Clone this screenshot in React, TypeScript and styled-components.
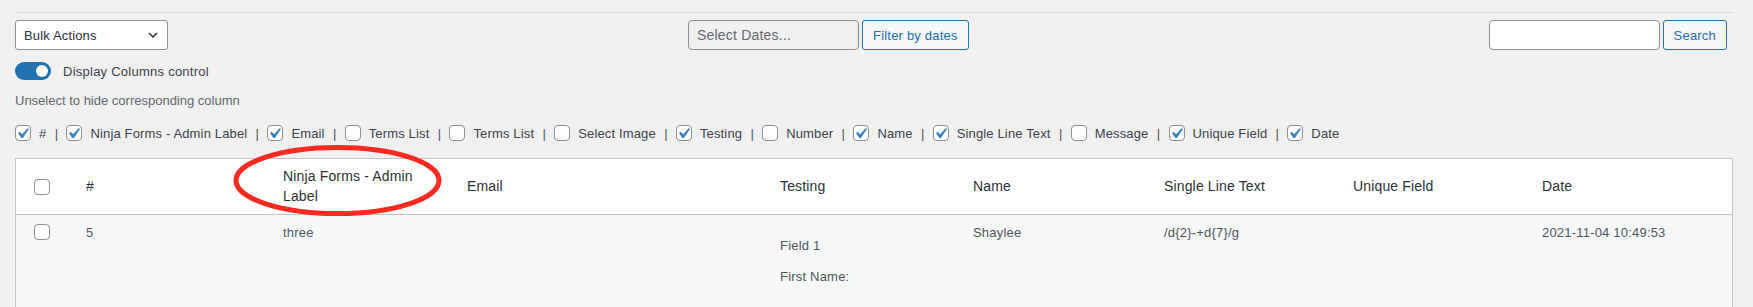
import React from "react";
import styled, { createGlobalStyle } from "styled-components";

const GlobalStyle = createGlobalStyle`
  html, body {
    margin: 0;
    padding: 0;
    background: #f0f0f1;
  }
  body {
    font-family: "Liberation Sans", Arial, sans-serif;
    font-size: 13px;
    color: #3c434a;
    letter-spacing: 0.2px;
  }
  * { box-sizing: border-box; }
`;

const Page = styled.div`
  position: relative;
  height: 307px;
  overflow: hidden;
  padding: 12px 20px 0 15px;
`;

const Wrap = styled.div`
  border-top: 1px solid #dcdcde;
`;

const Toolbar = styled.div`
  display: flex;
  align-items: center;
  margin-top: 7px;
  height: 30px;
`;

const SelectBox = styled.div`
  width: 153px;
  height: 30px;
  display: flex;
  align-items: center;
  justify-content: space-between;
  padding: 0 9px 0 8px;
  background: #fff;
  border: 1px solid #8c8f94;
  border-radius: 3px;
  color: #2c3338;
  font-size: 13px;
  letter-spacing: 0.15px;
`;

const Group = styled.div<{ $ml?: string; $mr?: string }>`
  display: flex;
  align-items: center;
  gap: 3px;
  margin-left: ${(p) => p.$ml ?? "0"};
  margin-right: ${(p) => p.$mr ?? "0"};
`;

const TextInput = styled.div<{ $bg: string }>`
  width: 171px;
  height: 30px;
  display: flex;
  align-items: center;
  padding: 0 8px;
  background: ${(p) => p.$bg};
  border: 1px solid #8c8f94;
  border-radius: 4px;
  color: #646970;
  font-size: 14px;
  letter-spacing: 0.2px;
`;

const Button = styled.div`
  height: 30px;
  display: flex;
  align-items: center;
  padding: 0 10px;
  background: #f6f7f7;
  border: 1px solid #2271b1;
  border-radius: 3px;
  color: #2271b1;
  font-size: 13px;
  white-space: nowrap;
`;

const ToggleRow = styled.div`
  display: flex;
  align-items: center;
  gap: 12px;
  margin-top: 12px;
  height: 18px;
`;

const Toggle = styled.span`
  position: relative;
  width: 36px;
  height: 18px;
  border-radius: 9px;
  background: #2271b1;
  flex: none;
  &::after {
    content: "";
    position: absolute;
    right: 3px;
    top: 3px;
    width: 12px;
    height: 12px;
    border-radius: 50%;
    background: #fff;
  }
`;

const ToggleLabel = styled.span`
  font-size: 13px;
  letter-spacing: 0.25px;
  color: #3c434a;
`;

const Hint = styled.div`
  margin-top: 11px;
  line-height: 20px;
  color: #646970;
  letter-spacing: 0;
`;

const Controls = styled.div`
  display: flex;
  align-items: center;
  margin-top: 12px;
  height: 20px;
  white-space: nowrap;
  letter-spacing: 0.15px;
`;

const ControlItem = styled.label`
  display: flex;
  align-items: center;
  gap: 8px;
  color: #3c434a;
`;

const Sep = styled.span`
  margin: 0 8.25px;
  color: #50575e;
`;

const Box = styled.span<{ $checked: boolean }>`
  position: relative;
  display: block;
  flex: none;
  width: 16px;
  height: 16px;
  background: #fff;
  border: 1px solid #8c8f94;
  border-radius: 4px;
  svg {
    position: absolute;
    left: -4px;
    top: -3px;
    width: 21px;
    height: 21px;
  }
`;

const Table = styled.table`
  margin-top: 15px;
  width: 100%;
  table-layout: fixed;
  border-spacing: 0;
  border-collapse: separate;
  border: 1px solid #c3c4c7;
  border-bottom: none;
`;

const HeadCell = styled.th<{ $cb?: boolean }>`
  background: #fff;
  border-bottom: 1px solid #c3c4c7;
  padding: ${(p) => (p.$cb ? "8px 0 8px 18px" : "8px 10px")};
  font-size: 14px;
  line-height: 1.4;
  letter-spacing: 0.15px;
  font-weight: 400;
  text-align: left;
  vertical-align: middle;
  color: #2c3338;
`;

const BodyRow = styled.tr`
  background: #f6f7f7;
  height: 100px;
`;

const Cell = styled.td<{ $cb?: boolean }>`
  padding: ${(p) => (p.$cb ? "9px 0 0 18px" : "8px 10px")};
  font-size: 13px;
  line-height: 1.5;
  vertical-align: top;
  color: #50575e;
`;

const Para = styled.p<{ $mt: number }>`
  margin: ${(p) => p.$mt}px 0 0;
`;

const Annotation = styled.svg`
  position: absolute;
  left: 233px;
  top: 145px;
  width: 209px;
  height: 71px;
  pointer-events: none;
`;

const Check: React.FC<{ checked: boolean }> = ({ checked }) => (
  <Box $checked={checked}>
    {checked && (
      <svg viewBox="0 0 20 20">
        <path
          d="M14.83 4.89l1.34.94-5.81 8.38H9.02L5.78 9.67l1.34-1.25 2.57 2.4z"
          fill="#3582c4"
        />
      </svg>
    )}
  </Box>
);

const Chevron = () => (
  <svg width="10" height="6" viewBox="0 0 10 6">
    <path d="M1 1l4 4 4-4" fill="none" stroke="#2c3338" strokeWidth="1.5" />
  </svg>
);

const controls: { label: string; checked: boolean }[] = [
  { label: "#", checked: true },
  { label: "Ninja Forms - Admin Label", checked: true },
  { label: "Email", checked: true },
  { label: "Terms List", checked: false },
  { label: "Terms List", checked: false },
  { label: "Select Image", checked: false },
  { label: "Testing", checked: true },
  { label: "Number", checked: false },
  { label: "Name", checked: true },
  { label: "Single Line Text", checked: true },
  { label: "Message", checked: false },
  { label: "Unique Field", checked: true },
  { label: "Date", checked: true },
];

const columns = [
  { label: "#", width: 197 },
  { label: "Ninja Forms - Admin Label", width: 184 },
  { label: "Email", width: 313 },
  { label: "Testing", width: 193 },
  { label: "Name", width: 191 },
  { label: "Single Line Text", width: 189 },
  { label: "Unique Field", width: 189 },
  { label: "Date", width: 200 },
];

export default function App() {
  return (
    <>
      <GlobalStyle />
      <Page>
        <Wrap>
          <Toolbar>
            <SelectBox>
              <span>Bulk Actions</span>
              <Chevron />
            </SelectBox>
            <Group $ml="520px">
              <TextInput $bg="#f0f0f1">Select Dates...</TextInput>
              <Button>Filter by dates</Button>
            </Group>
            <Group $ml="auto" $mr="6px">
              <TextInput $bg="#fff" />
              <Button>Search</Button>
            </Group>
          </Toolbar>

          <ToggleRow>
            <Toggle />
            <ToggleLabel>Display Columns control</ToggleLabel>
          </ToggleRow>

          <Hint>Unselect to hide corresponding column</Hint>

          <Controls>
            {controls.map((c, i) => (
              <React.Fragment key={i}>
                {i > 0 && <Sep>|</Sep>}
                <ControlItem>
                  <Check checked={c.checked} />
                  <span>{c.label}</span>
                </ControlItem>
              </React.Fragment>
            ))}
          </Controls>

          <Table>
            <colgroup>
              <col style={{ width: 60 }} />
              {columns.map((c, i) => (
                <col key={i} style={{ width: c.width }} />
              ))}
            </colgroup>
            <thead>
              <tr>
                <HeadCell $cb>
                  <Check checked={false} />
                </HeadCell>
                {columns.map((c, i) => (
                  <HeadCell key={i}>{c.label}</HeadCell>
                ))}
              </tr>
            </thead>
            <tbody>
              <BodyRow>
                <Cell $cb>
                  <Check checked={false} />
                </Cell>
                <Cell>5</Cell>
                <Cell>three</Cell>
                <Cell></Cell>
                <Cell>
                  <Para $mt={13}>Field 1</Para>
                  <Para $mt={11}>First Name:</Para>
                </Cell>
                <Cell>Shaylee</Cell>
                <Cell>/d&#123;2&#125;-+d&#123;7&#125;/g</Cell>
                <Cell></Cell>
                <Cell>2021-11-04 10:49:53</Cell>
              </BodyRow>
            </tbody>
          </Table>
        </Wrap>

        <Annotation viewBox="0 0 209 71">
          <ellipse
            cx="104.5"
            cy="35.5"
            rx="101.5"
            ry="33"
            fill="none"
            stroke="#ff2a1f"
            strokeWidth="5"
          />
        </Annotation>
      </Page>
    </>
  );
}
